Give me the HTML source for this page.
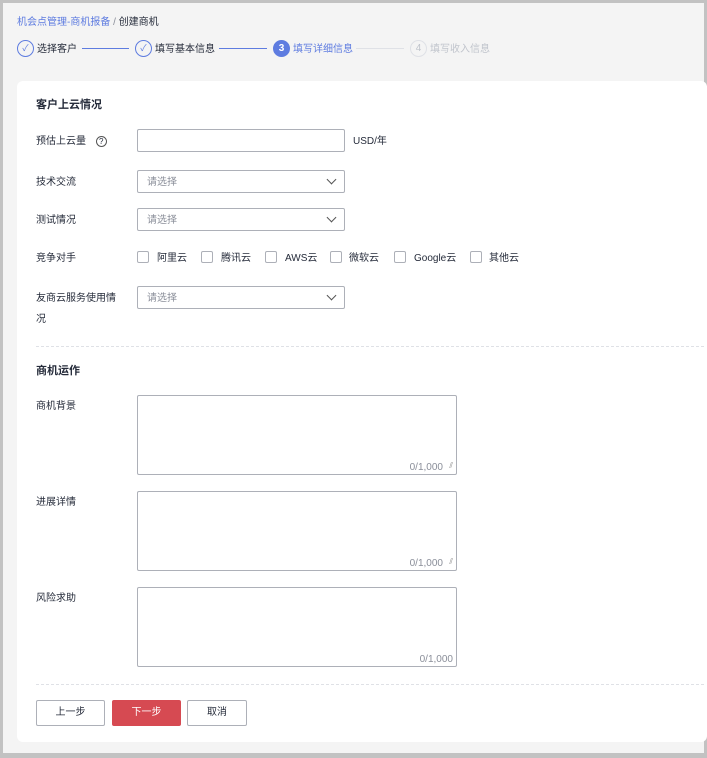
<!DOCTYPE html>
<html><head><meta charset="utf-8"><style>
*{box-sizing:border-box;margin:0;padding:0}
body{width:707px;height:758px;background:#c2c2c2;font-family:"Liberation Sans","Noto Sans CJK SC",sans-serif;font-size:10px;line-height:12px;color:#252b3a;position:relative;overflow:hidden}
.page{position:absolute;left:3px;top:3px;width:701px;height:750px;background:#f4f4f4}
.a{position:absolute}
.card{position:absolute;left:17px;top:81px;width:690px;height:661px;background:#fff;border-radius:6px}
.inp{position:absolute;border:1px solid #adb0b8;border-radius:2px;background:#fff;height:23px;width:208px;left:137px;color:#8a8e99;padding:1px 9px 0;line-height:21px;font-size:10px}
.chev{position:absolute;right:9px;top:5px;width:7px;height:7px;border-right:1.3px solid #555;border-bottom:1.3px solid #555;transform:rotate(45deg)}
.ta{position:absolute;left:137px;width:320px;height:80px;border:1px solid #adb0b8;border-radius:2px}
.cnt{position:absolute;right:13px;bottom:0px;color:#8a8e99;font-size:10px}
.cb{position:absolute;width:12px;height:12px;border:1px solid #adb0b8;border-radius:2px;top:251px}
.lbl{position:absolute;left:36px;font-size:10px}
.step{position:absolute;top:40px;width:17px;height:17px;border-radius:50%;border:1px solid #5e7ce0;text-align:center;line-height:15px}
.line{position:absolute;top:48px;height:1px;background:#5e7ce0}
.dash{position:absolute;left:36px;width:668px;border-top:1px dashed #dfe1e6}
.btn{position:absolute;top:700px;height:26px;border:1px solid #adb0b8;border-radius:2px;text-align:center;line-height:24px;background:#fff}
</style></head><body>
<div class="page"></div>
<div class="a" style="left:17px;top:17px;color:#5e7ce0">机会点管理-商机报备 <span style="color:#8a8e99">/</span> <span style="color:#252b3a">创建商机</span></div>
<div class="step" style="left:17px;color:#5e7ce0;font-size:9px">✓</div><div class="a" style="left:37px;top:44px">选择客户</div>
<div class="line" style="left:82px;width:47px"></div>
<div class="step" style="left:135px;color:#5e7ce0;font-size:9px">✓</div><div class="a" style="left:155px;top:44px">填写基本信息</div>
<div class="line" style="left:219px;width:48px"></div>
<div class="step" style="left:273px;background:#5e7ce0;color:#fff;font-weight:bold">3</div><div class="a" style="left:293px;top:44px;color:#5e7ce0">填写详细信息</div>
<div class="line" style="left:356px;width:48px;background:#dfe1e6"></div>
<div class="step" style="left:410px;border-color:#dfe1e6;color:#c0c4cc">4</div><div class="a" style="left:430px;top:44px;color:#c0c4cc">填写收入信息</div>
<div class="card"></div>
<div class="a" style="left:36px;top:99px;font-size:11px;font-weight:bold">客户上云情况</div>
<div class="lbl" style="top:136px">预估上云量 <span style="display:inline-block;width:11px;height:11px;border:1px solid #555;border-radius:50%;text-align:center;line-height:9px;font-size:8px;margin-left:7px;vertical-align:top">?</span></div>
<div class="inp" style="top:129px"></div><div class="a" style="left:353px;top:136px">USD/年</div>
<div class="lbl" style="top:177px">技术交流</div><div class="inp" style="top:170px">请选择<div class="chev"></div></div>
<div class="lbl" style="top:215px">测试情况</div><div class="inp" style="top:208px">请选择<div class="chev"></div></div>
<div class="lbl" style="top:253px">竞争对手</div>
<div class="cb" style="left:137px"></div><div class="a" style="left:157px;top:253px">阿里云</div>
<div class="cb" style="left:201px"></div><div class="a" style="left:221px;top:253px">腾讯云</div>
<div class="cb" style="left:265px"></div><div class="a" style="left:285px;top:253px">AWS云</div>
<div class="cb" style="left:330px"></div><div class="a" style="left:349px;top:253px">微软云</div>
<div class="cb" style="left:394px"></div><div class="a" style="left:414px;top:253px">Google云</div>
<div class="cb" style="left:470px"></div><div class="a" style="left:489px;top:253px">其他云</div>
<div class="lbl" style="top:288px;line-height:21px;width:80px">友商云服务使用情况</div><div class="inp" style="top:286px">请选择<div class="chev"></div></div>
<div class="dash" style="top:346px"></div>
<div class="a" style="left:36px;top:365px;font-size:11px;font-weight:bold">商机运作</div>
<div class="lbl" style="top:401px">商机背景</div><div class="ta" style="top:395px"><div class="cnt">0/1,000</div><div class="a" style="right:3px;bottom:2px;color:#888;font-size:8px">⫽</div></div>
<div class="lbl" style="top:497px">进展详情</div><div class="ta" style="top:491px"><div class="cnt">0/1,000</div><div class="a" style="right:3px;bottom:2px;color:#888;font-size:8px">⫽</div></div>
<div class="lbl" style="top:593px">风险求助</div><div class="ta" style="top:587px"><div class="cnt" style="right:3px">0/1,000</div></div>
<div class="dash" style="top:684px"></div>
<div class="btn" style="left:36px;width:69px">上一步</div>
<div class="btn" style="left:112px;width:69px;background:#d64a52;border-color:#d64a52;color:#fff">下一步</div>
<div class="btn" style="left:187px;width:60px">取消</div>
</body></html>
